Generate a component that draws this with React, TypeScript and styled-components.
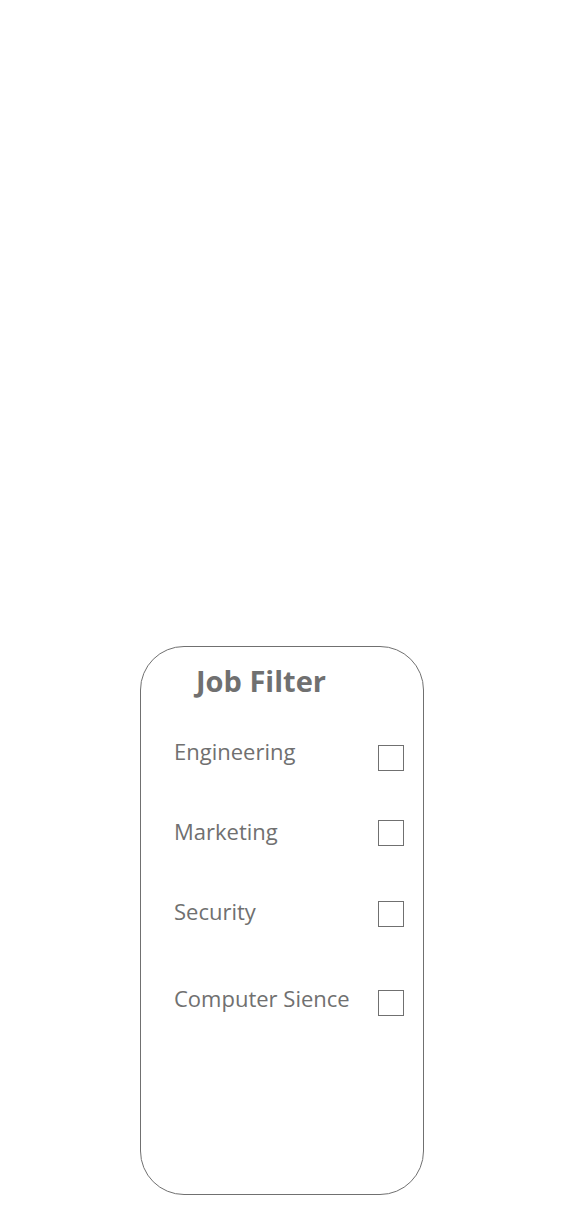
import styled, { createGlobalStyle } from "styled-components";

const GlobalStyle = createGlobalStyle`
    body {
        margin: 0;
        background: #ffffff;
        font-family: "Open Sans", "Noto Sans", sans-serif;
        color: #707070;
    }
`;

const Page = styled.div`
    padding: 646px 0 0 140px;
    min-height: 1218px;
    box-sizing: border-box;
`;

const Card = styled.div`
    box-sizing: border-box;
    width: 284px;
    height: 549px;
    border: 1px solid #707070;
    border-radius: 44px;
    padding: 19px 19px 0 33px;
    display: flex;
    flex-direction: column;
`;

const Title = styled.h2`
    margin: 0 0 0 22px;
    font-size: 29px;
    line-height: 29px;
    font-weight: 700;
    color: #707070;
`;

const Row = styled.label<{ $gap: number }>`
    display: flex;
    justify-content: space-between;
    align-items: flex-start;
    margin-top: ${(p) => p.$gap}px;
    cursor: pointer;
`;

const Label = styled.span`
    font-size: 22px;
    line-height: 22px;
    color: #707070;
`;

const Box = styled.input<{ $nudge: number }>`
    appearance: none;
    box-sizing: border-box;
    width: 26px;
    height: 26px;
    margin: ${(p) => p.$nudge}px 0 0 0;
    border: 1px solid #707070;
    border-radius: 0;
    background: #ffffff;
    cursor: pointer;

    &:checked {
        background: #707070;
    }
`;

const filters = [
    { name: "Engineering", gap: 45, nudge: 5 },
    { name: "Marketing", gap: 49, nudge: 0 },
    { name: "Security", gap: 54, nudge: 1 },
    { name: "Computer Sience", gap: 60, nudge: 3 },
];

export default function App() {
    return (
        <>
            <GlobalStyle />
            <Page>
                <Card>
                    <Title>Job Filter</Title>
                    {filters.map((f) => (
                        <Row key={f.name} $gap={f.gap}>
                            <Label>{f.name}</Label>
                            <Box type="checkbox" $nudge={f.nudge} />
                        </Row>
                    ))}
                </Card>
            </Page>
        </>
    );
}
